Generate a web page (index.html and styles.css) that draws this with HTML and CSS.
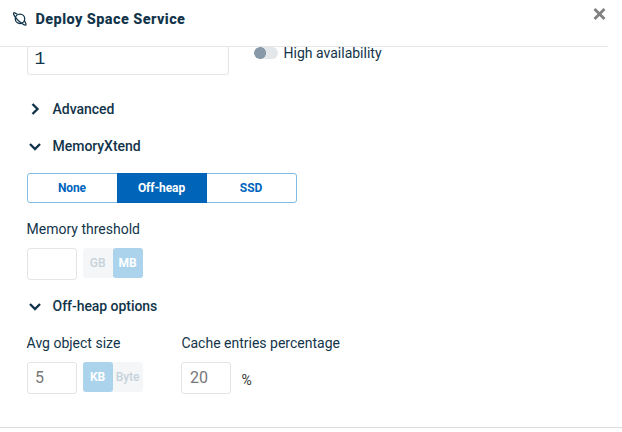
FILE: index.html
```html
<!DOCTYPE html>
<html lang="en">
<head>
<meta charset="utf-8">
<title>Deploy Space Service</title>
<link rel="stylesheet" href="styles.css">
</head>
<body>
<div class="dialog">
  <header class="header">
    <svg class="logo" width="14" height="14" viewBox="0 0 14 14"><circle cx="7" cy="6.800" r="4.700"/><path d="M4.200 2.300C2.400 1 1 .4.700.8c-.5.6.5 2.900 2.400 5.300 2.700 3.600 8.600 7.900 9.700 6.900.5-.5-.1-2.200-1.500-4.400"/></svg>
    <h1 class="title">Deploy Space Service</h1>
    <svg class="close" width="13" height="12" viewBox="0 0 13 12"><path d="M1.500 1l10 10M11.500 1l-10 10"/></svg>
  </header>
  <main class="content">
    <div class="row top-row">
      <div class="input wide">1</div>
      <span class="toggle"></span>
      <span class="label toggle-label">High availability</span>
    </div>
    <h2 class="section advanced"><svg class="chev" width="16" height="16" viewBox="0 0 16 16"><path d="M5.500 3l5 5-5 5"/></svg><span>Advanced</span></h2>
    <h2 class="section memory"><svg class="chev" width="16" height="16" viewBox="0 0 16 16"><path d="M3 6l5 5 5-5"/></svg><span>MemoryXtend</span></h2>
    <div class="tabs"><span class="tab">None</span><span class="tab on">Off-heap</span><span class="tab">SSD</span></div>
    <div class="label threshold">Memory threshold</div>
    <div class="row">
      <div class="input small"></div>
      <div class="units"><span class="unit">GB</span><span class="unit sel">MB</span></div>
    </div>
    <h2 class="section options"><svg class="chev" width="16" height="16" viewBox="0 0 16 16"><path d="M3 6l5 5 5-5"/></svg><span>Off-heap options</span></h2>
    <div class="row fields">
      <div class="field">
        <div class="label">Avg object size</div>
        <div class="row">
          <div class="input small">5</div>
          <div class="units"><span class="unit sel">KB</span><span class="unit">Byte</span></div>
        </div>
      </div>
      <div class="field cache">
        <div class="label">Cache entries percentage</div>
        <div class="row"><div class="input small">20</div><span class="percent">%</span></div>
      </div>
    </div>
  </main>
</div>
</body>
</html>
```

FILE: styles.css
```css
* { box-sizing: border-box; }
body { margin: 0; background: #fff; color: #12344a; font: 14px/18px Roboto, sans-serif; }
svg { display: block; fill: none; flex: none; }
h1, h2 { margin: 0; }
.dialog { width: 622px; height: 428px; border-bottom: 1px solid #dcdcdc; overflow: hidden; }
.header { display: flex; align-items: flex-start; width: 608px; height: 47px; padding: 10px 2px 0 13px; border-bottom: 1px solid #e6e6e6; }
.logo { stroke: #12344a; stroke-width: 1.3; margin-top: 2px; }
.title { flex: 1; margin: 1px 0 0 8.5px; font: 800 14.5px/18px Roboto, sans-serif; letter-spacing: .42px; }
.close { stroke: #808080; stroke-width: 2.8; margin-top: -2px; }
.content { height: 380px; padding-left: 26.6px; overflow: hidden; }
.row { display: flex; align-items: flex-start; }
.top-row { height: 28px; align-items: flex-end; }
.input { flex: none; height: 32px; border: 1px solid #e3e5e7; border-radius: 3px; padding-left: 7.5px; font: 16px/30px Roboto, sans-serif; color: #777; }
.wide { width: 202px; padding-left: 7px; color: #12344a; font: 18px/30px "Liberation Mono", monospace; }
.small { width: 50px; }
.toggle { width: 24px; height: 12px; margin: 0 6px 16px 25px; border-radius: 6px; background: radial-gradient(circle at 6px 6px, #8799a8 5.7px, #e3e7ea 6.2px); }
.label { line-height: 18px; white-space: nowrap; }
.toggle-label { margin-bottom: 13px; }
.section { display: flex; align-items: center; height: 18px; font: 500 14px/18px Roboto, sans-serif; letter-spacing: -.05px; }
.chev { margin-right: 10px; stroke: #12344a; stroke-width: 2.4; }
.advanced { margin-top: 25px; }
.memory { margin-top: 19px; }
.tabs { display: flex; width: 270px; height: 30px; margin: 18px 0 0 .4px; border: 1px solid #80bce1; border-radius: 3px; }
.tab { width: 89px; padding-right: 1px; text-align: center; font: 700 12px/28px Roboto, sans-serif; letter-spacing: -.1px; color: #0064bd; }
.tab.on { width: 90px; background: #0064b8; color: #fff; margin: -1px 0; line-height: 30px; }
.threshold { margin: 17px 0 10px; }
.units { display: flex; height: 30px; margin-left: 6px; background: #f5f6f8; border-radius: 3px; }
.unit { width: 30px; text-align: center; font: 500 12px/30px Roboto, sans-serif; color: #c6d2da; }
.unit.sel { font-weight: 700; background: #abd3ec; color: #fff; border-radius: 3px; }
.options { margin-top: 17px; }
.fields { margin-top: 19px; }
.field { width: 154px; }
.cache { margin-left: .8px; }
.field .label { margin-bottom: 10px; }
.percent { margin: 9px 0 0 10px; color: #333; }
```
